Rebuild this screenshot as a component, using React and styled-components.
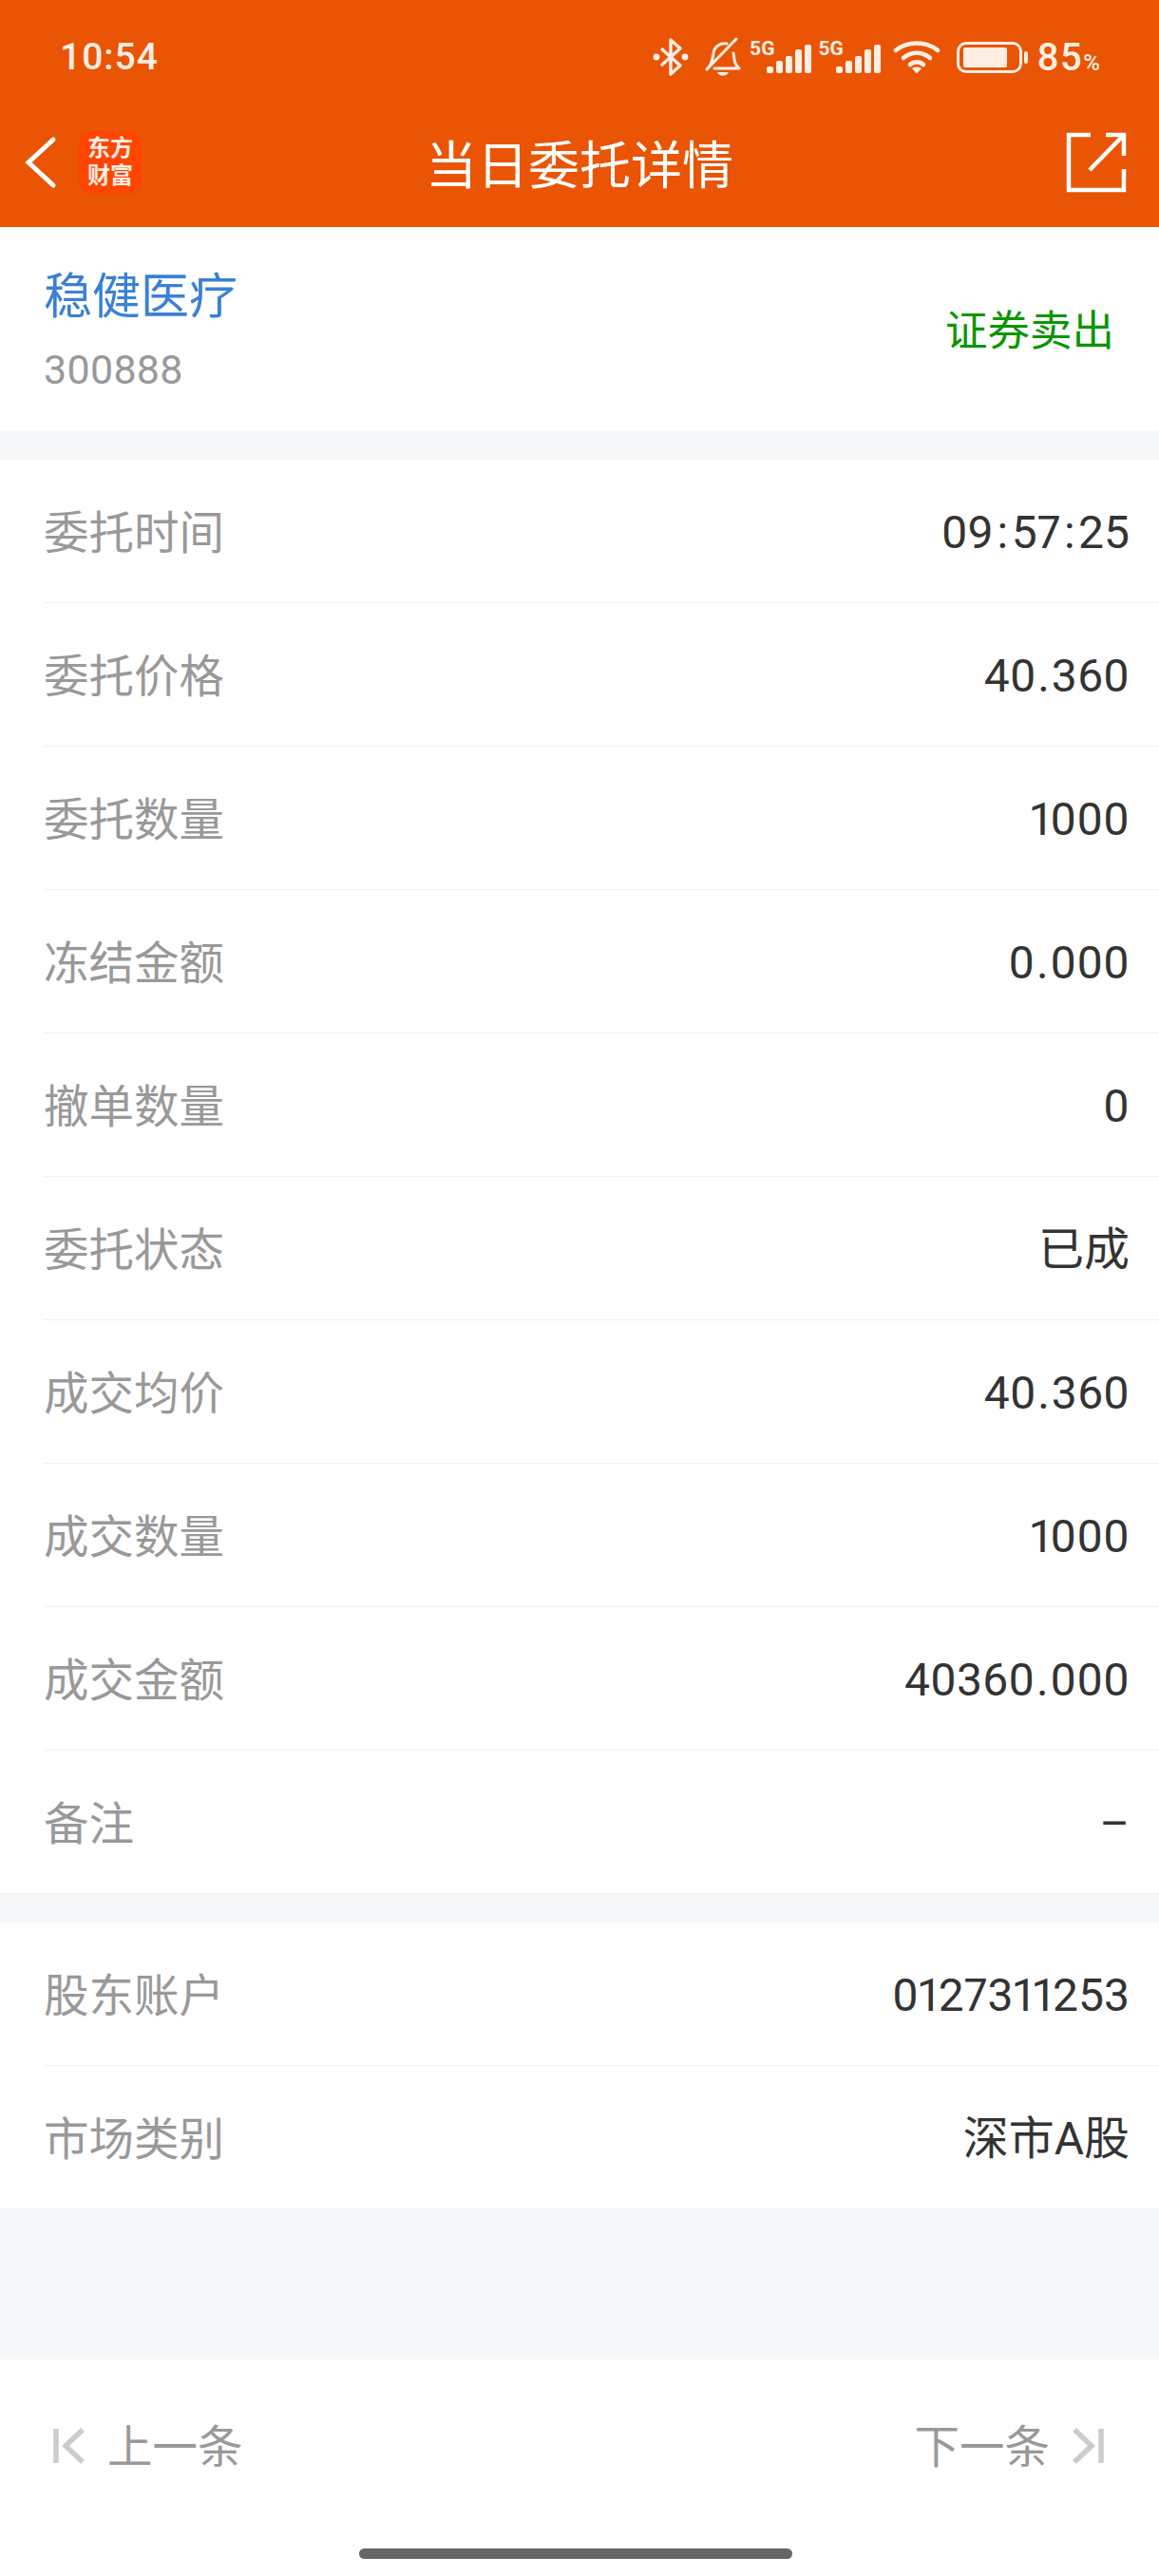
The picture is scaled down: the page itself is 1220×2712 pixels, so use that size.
import React from "react";
import styled, { createGlobalStyle } from "styled-components";

const GlobalStyle = createGlobalStyle`
  html, body {
    margin: 0;
    padding: 0;
    background: #f6f7f9;
  }
  * {
    box-sizing: border-box;
  }
`;

const FONT = `"Noto Sans CJK SC", "Noto Sans", sans-serif`;
const NUM_FONT = `Roboto, "Noto Sans CJK SC", sans-serif`;
const STATUS = "#ffeee4";

const sectionOne = [
  ["委托时间", "09:57:25"],
  ["委托价格", "40.360"],
  ["委托数量", "1000"],
  ["冻结金额", "0.000"],
  ["撤单数量", "0"],
  ["委托状态", "已成"],
  ["成交均价", "40.360"],
  ["成交数量", "1000"],
  ["成交金额", "40360.000"],
  ["备注", "–"],
];

const sectionTwo = [
  ["股东账户", "0127311253"],
  ["市场类别", "深市A股"],
];

// colons and dots sit wider in the app's font than in Roboto
const renderValue = (value) =>
  value.split(/([:.])/).map((part, i) =>
    part === ":" || part === "." ? (
      <Sep key={i} $colon={part === ":"}>
        {part}
      </Sep>
    ) : (
      part
    )
  );

export default function App() {
  return (
    <Page>
      <GlobalStyle />
      <Top>
        <StatusBar>
          <Clock>10:54</Clock>
          <StatusIcons>
            <Slot>
              <svg width="38" height="42" viewBox="0 0 38 42" fill="none" stroke={STATUS} strokeWidth="3.4" strokeLinejoin="round">
                <path d="M9 12 L29 30 L19 39 V3 L29 12 L9 30" />
                <circle cx="4" cy="21" r="3.4" fill={STATUS} stroke="none" />
                <circle cx="34" cy="21" r="3.4" fill={STATUS} stroke="none" />
              </svg>
            </Slot>
            <Slot $ml={17}>
              <svg width="38" height="42" viewBox="0 0 38 42" fill="none" stroke={STATUS} strokeWidth="3" strokeLinecap="round" strokeLinejoin="round">
                <path d="M3 33 C8 28 8 22 9 17 C10 10 16 6 23 7 M30 17 C31 24 31 29 36 33 H10" />
                <path d="M2 34 L33 2" />
                <path d="M13 37 H25 C23 42 15 42 13 37 Z" fill={STATUS} stroke="none" />
              </svg>
            </Slot>
            <Slot $ml={9}>
              <Signal />
            </Slot>
            <Slot $ml={7}>
              <Signal />
            </Slot>
            <Slot $ml={13}>
              <svg width="50" height="36" viewBox="0 0 50 36" fill="none" stroke={STATUS} strokeWidth="4.6" strokeLinecap="round">
                <path d="M3 11 C15 1 35 1 47 11" />
                <path d="M11 19 C19 12 31 12 39 19" />
                <path d="M18 26 C22 22.5 28 22.5 32 26" />
                <path d="M25 35.5 L20 30 C23 28 27 28 30 30 Z" fill={STATUS} stroke="none" />
              </svg>
            </Slot>
            <Slot $ml={17}>
              <Battery>
                <BatteryFill />
              </Battery>
            </Slot>
            <BatteryCap />
            <Percent>
              85<small>%</small>
            </Percent>
          </StatusIcons>
        </StatusBar>
        <NavBar>
          <NavLeft>
            <svg width="34" height="56" viewBox="0 0 34 56" fill="none" stroke="#fff" strokeWidth="5" strokeLinecap="round">
              <path d="M30 4 L4 28 L30 52" />
            </svg>
            <Logo>
              <span>东方</span>
              <span>财富</span>
            </Logo>
          </NavLeft>
          <Title>当日委托详情</Title>
          <svg width="66" height="66" viewBox="0 0 66 66" fill="none" stroke="#fff" strokeWidth="4.5">
            <path d="M27 4 H4 V62 H62 V40" />
            <path d="M26 41 L61 5 M43 4 H62 V26" />
          </svg>
        </NavBar>
      </Top>

      <StockHead>
        <div>
          <StockName>稳健医疗</StockName>
          <StockCode>300888</StockCode>
        </div>
        <Side>证券卖出</Side>
      </StockHead>

      <Section>
        {sectionOne.map(([label, value]) => (
          <Row key={label}>
            <Label>{label}</Label>
            <Value>{renderValue(value)}</Value>
          </Row>
        ))}
      </Section>

      <Section>
        {sectionTwo.map(([label, value]) => (
          <Row key={label}>
            <Label>{label}</Label>
            <Value>{renderValue(value)}</Value>
          </Row>
        ))}
      </Section>

      <Footer>
        <Pager>
          <PagerSide>
            <svg width="34" height="38" viewBox="0 0 34 38" fill="none" stroke="#cccccc" strokeWidth="5.5">
              <path d="M3 1 V37 M31 2 L13 19 L31 36" />
            </svg>
            <PagerText>上一条</PagerText>
          </PagerSide>
          <PagerSide>
            <PagerText>下一条</PagerText>
            <svg width="34" height="38" viewBox="0 0 34 38" fill="none" stroke="#cccccc" strokeWidth="5.5">
              <path d="M31 1 V37 M3 2 L21 19 L3 36" />
            </svg>
          </PagerSide>
        </Pager>
        <HomeBar />
      </Footer>
    </Page>
  );
}

function Signal() {
  return (
    <SignalWrap>
      <SignalTag>5G</SignalTag>
      <Bars>
        <Bar $h={7} />
        <Bar $h={13} />
        <Bar $h={18} />
        <Bar $h={25} />
        <Bar $h={30} />
      </Bars>
    </SignalWrap>
  );
}

const Page = styled.div`
  width: 1220px;
  height: 2712px;
  display: flex;
  flex-direction: column;
  background: #f6f7f9;
  font-family: ${FONT};
  overflow: hidden;
`;

const Top = styled.header`
  height: 239px;
  padding-bottom: 17px;
  background: #e95504;
  color: #fff;
`;

const StatusBar = styled.div`
  height: 120px;
  padding: 0 62px 0 63px;
  display: flex;
  align-items: center;
  justify-content: space-between;
`;

const Clock = styled.span`
  font-family: Roboto, sans-serif;
  font-size: 39px;
  font-weight: 500;
  letter-spacing: 1px;
  color: ${STATUS};
`;

const StatusIcons = styled.div`
  display: flex;
  align-items: center;
  color: ${STATUS};
`;

const Slot = styled.div`
  display: flex;
  align-items: center;
  margin-left: ${(p) => p.$ml || 0}px;
`;

const SignalWrap = styled.div`
  display: flex;
  align-items: flex-end;
  height: 34px;
`;

const SignalTag = styled.span`
  font-family: Roboto, sans-serif;
  font-size: 21px;
  font-weight: 700;
  line-height: 16px;
  align-self: flex-start;
  margin-right: -8px;
`;

const Bars = styled.div`
  display: flex;
  align-items: flex-end;
  gap: 3px;
`;

const Bar = styled.i`
  display: block;
  width: 7px;
  height: ${(p) => p.$h}px;
  background: ${STATUS};
  border-radius: 2px;
`;

const Battery = styled.div`
  width: 69px;
  height: 33px;
  padding: 3px 13px 3px 4px;
  border: 3px solid ${STATUS};
  border-radius: 10px;
  display: flex;
`;

const BatteryFill = styled.div`
  flex: 1;
  background: ${STATUS};
  border-radius: 2px;
`;

const BatteryCap = styled.div`
  width: 4px;
  height: 13px;
  margin-left: 2px;
  background: ${STATUS};
  border-radius: 2px;
`;

const Percent = styled.span`
  margin-left: 10px;
  font-family: Roboto, sans-serif;
  font-size: 40px;
  font-weight: 500;
  letter-spacing: 1.5px;
  small {
    font-size: 24px;
    letter-spacing: 0;
  }
`;

const NavBar = styled.div`
  height: 102px;
  padding: 0 33px 0 26px;
  display: flex;
  align-items: center;
  justify-content: space-between;
  position: relative;
`;

const NavLeft = styled.div`
  display: flex;
  align-items: center;
  gap: 23px;
`;

const Logo = styled.div`
  width: 66px;
  height: 66px;
  border-radius: 13px;
  background: #ff4500;
  color: ${STATUS};
  font-family: "Liberation Serif", "Noto Sans CJK SC", serif;
  font-size: 24px;
  font-weight: 700;
  display: flex;
  flex-direction: column;
  align-items: center;
  justify-content: center;
  span {
    display: block;
    line-height: 29px;
  }
`;

const Title = styled.h1`
  position: absolute;
  left: 0;
  right: 0;
  margin: 0;
  text-align: center;
  font-size: 54px;
  font-weight: 400;
  padding-bottom: 2px;
  pointer-events: none;
`;

const StockHead = styled.div`
  height: 215px;
  padding: 0 47px 0 46px;
  background: #fff;
  display: flex;
  align-items: center;
  justify-content: space-between;
`;

const StockName = styled.div`
  font-size: 51px;
  line-height: 70px;
  margin-top: -2px;
  color: #3a80d6;
`;

const StockCode = styled.div`
  font-family: Roboto, sans-serif;
  font-size: 43px;
  line-height: 58px;
  margin-top: 17px;
  letter-spacing: 0.3px;
  color: #999;
`;

const Side = styled.div`
  font-size: 44.5px;
  line-height: 60px;
  padding-bottom: 4px;
  color: #0a9600;
`;

const Section = styled.section`
  margin-top: 30px;
  padding-left: 46px;
  background: #fff;
  border-bottom: 1px solid #f0f1f3;
`;

const Row = styled.div`
  height: 151px;
  padding-right: 31px;
  display: flex;
  align-items: center;
  justify-content: space-between;
  border-bottom: 1px solid #f0f1f3;
  &:last-child {
    height: 150px;
    border-bottom: 0;
  }
`;

const Label = styled.span`
  font-size: 47.5px;
  line-height: 60px;
  padding-bottom: 3px;
  color: #999;
`;

const Value = styled.span`
  font-family: ${NUM_FONT};
  font-size: 48px;
  line-height: 60px;
  padding-top: 4px;
  font-variant-numeric: proportional-nums;
  color: #333;
`;

const Sep = styled.span`
  padding: 0 ${(p) => (p.$colon ? 3.5 : 1.7)}px;
`;

const Footer = styled.footer`
  margin-top: auto;
  height: 228px;
  background: #fff;
  position: relative;
`;

const Pager = styled.div`
  height: 182px;
  padding: 0 58px 0 56px;
  display: flex;
  align-items: center;
  justify-content: space-between;
`;

const PagerSide = styled.div`
  display: flex;
  align-items: center;
  gap: 23px;
`;

const PagerText = styled.span`
  font-size: 47.5px;
  line-height: 60px;
  padding-bottom: 4px;
  color: #999;
`;

const HomeBar = styled.div`
  position: absolute;
  left: 378px;
  bottom: 18px;
  width: 456px;
  height: 11px;
  border-radius: 6px;
  background: #666;
`;
